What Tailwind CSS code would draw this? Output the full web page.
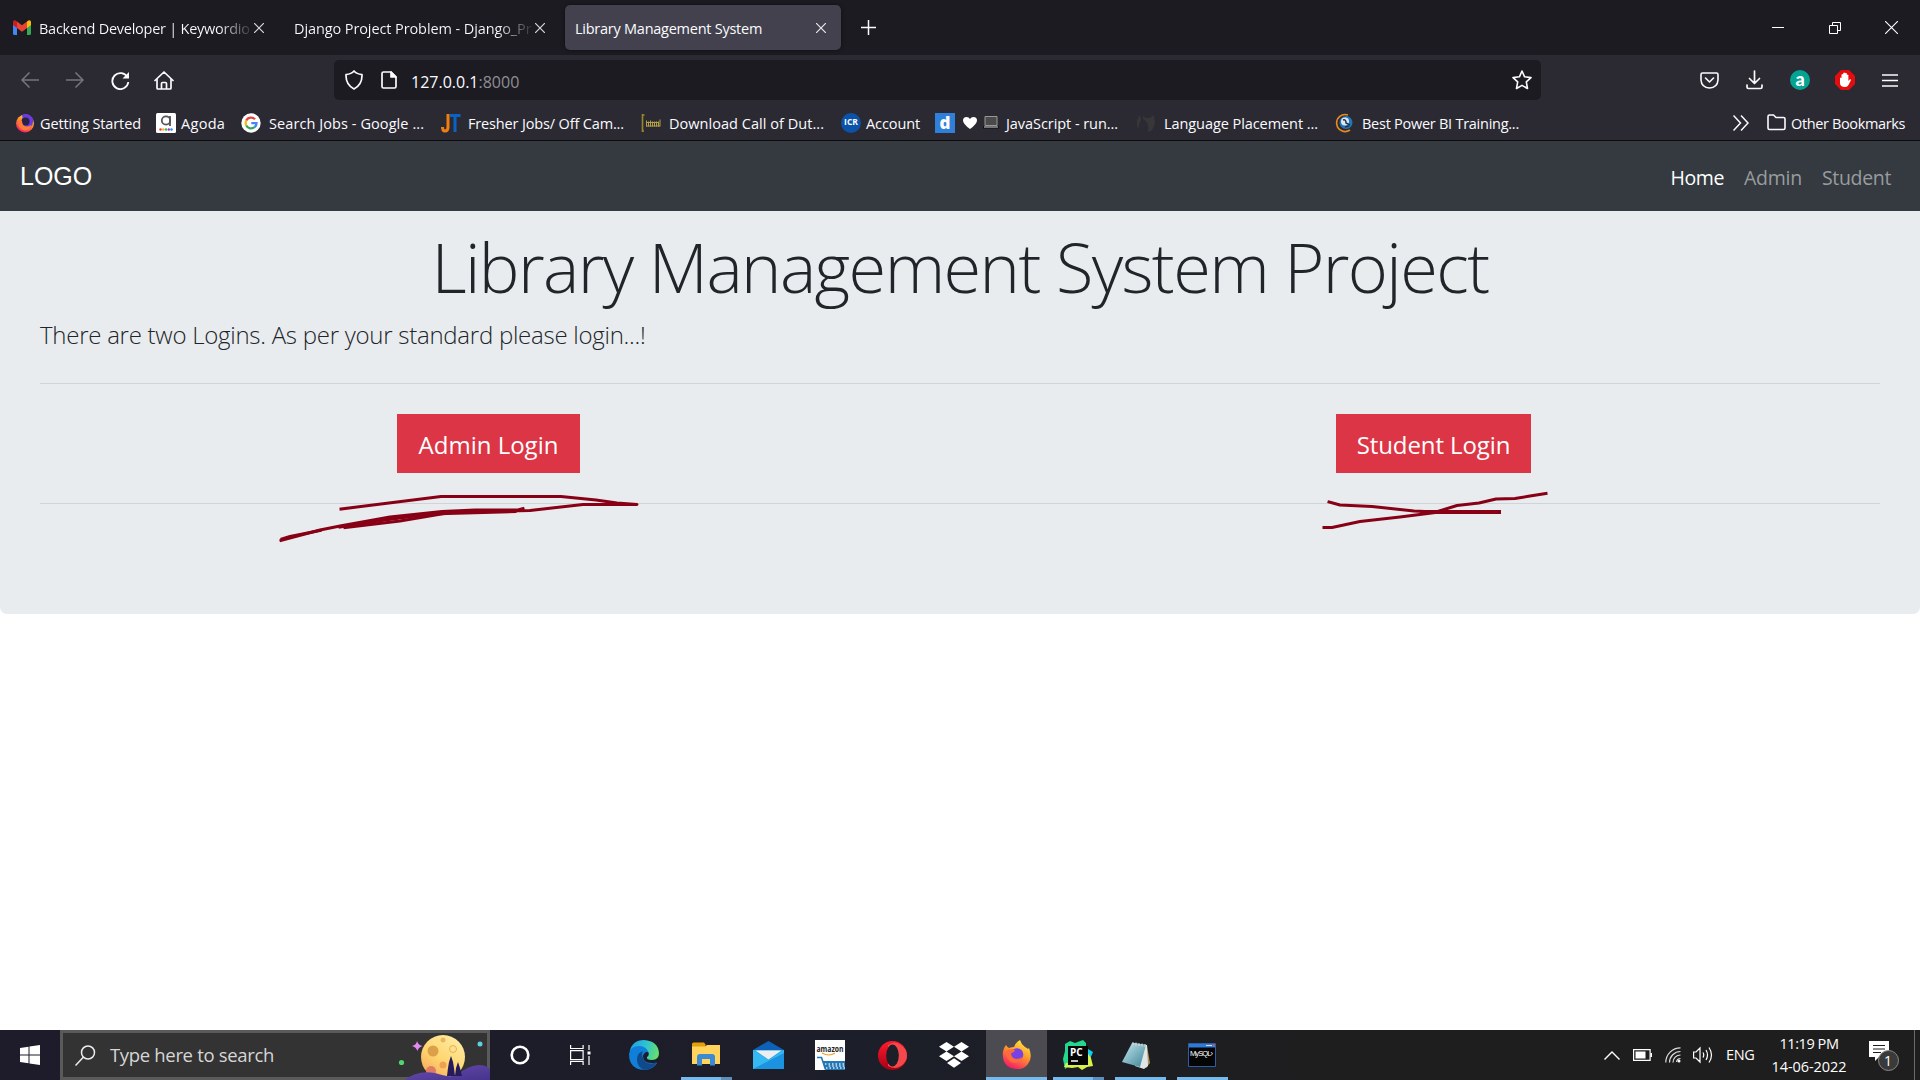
<!DOCTYPE html>
<html lang="en">
<head>
<meta charset="utf-8">
<title>Library Management System</title>
<script src="https://cdn.jsdelivr.net/npm/@tailwindcss/browser@4"></script>
</head>
<body class="h-[1080px] w-[1920px] overflow-hidden bg-white font-['Open_Sans','Noto_Sans',sans-serif] antialiased">
<div class="flex h-full flex-col">

<!-- Tab strip -->
<header class="flex h-[55px] shrink-0 items-center bg-[#1c1b22] text-[14.5px] text-[#fbfbfe]">
  <div class="flex w-[281px] items-center pl-[13px]">
    <svg class="mr-[8px] h-[15px] w-[18px]" viewBox="0 0 18 15"><path d="M0 2v11.500Q0 15 1.500 15H4V5z" fill="#4285f4"/><path d="M14 5v10h2.500Q18 15 18 13.500V2z" fill="#34a853"/><path d="M14 1.500V8l4-3V2q-.5-3-4-.5" fill="#fbbc04"/><path d="M0 2v3l4 3V1.500Q.5-1 0 2" fill="#c5221f"/><path d="M4 1.500V8l5 3.800L14 8V1.500L9 5.300z" fill="#ea4335"/></svg>
    <span class="w-[212px] bg-linear-to-r from-[#fbfbfe] from-85% to-[#33323a] bg-clip-text pt-[2px] tracking-[-0.25px] whitespace-nowrap text-transparent">Backend Developer | Keywordio</span>
    <svg class="ml-[3px] h-[10px] w-[10px]" viewBox="0 0 10 10" stroke="#d8d8dc" stroke-width="1.200"><path d="M0 0l10 10M10 0L0 10"/></svg>
  </div>
  <div class="flex w-[284px] items-center pl-[13px]">
    <span class="w-[239px] bg-linear-to-r from-[#fbfbfe] from-85% to-[#29282f] bg-clip-text pt-[2px] tracking-[-0.1px] whitespace-nowrap text-transparent">Django Project Problem - Django_Pr</span>
    <svg class="ml-[2px] h-[10px] w-[10px]" viewBox="0 0 10 10" stroke="#d8d8dc" stroke-width="1.200"><path d="M0 0l10 10M10 0L0 10"/></svg>
  </div>
  <div class="flex h-[45px] w-[276px] items-center justify-between rounded-[5px] bg-[#42414d] pr-[15px] pl-[10px] shadow-[0_0_4px_rgba(0,0,0,.5)]">
    <span class="pt-[2px] tracking-[-0.25px] whitespace-nowrap">Library Management System</span>
    <svg class="h-[10px] w-[10px]" viewBox="0 0 10 10" stroke="#e8e8ec" stroke-width="1.200"><path d="M0 0l10 10M10 0L0 10"/></svg>
  </div>
  <svg class="ml-[20px] h-[15px] w-[15px]" viewBox="0 0 15 15" stroke="#fbfbfe" stroke-width="1.500"><path d="M7.500 0v15M0 7.500h15"/></svg>
  <div class="ml-auto flex items-center pr-[22px]">
    <svg class="h-[12px] w-[12px]" viewBox="0 0 12 12" stroke="#fff"><path d="M0 5.500h12"/></svg>
    <svg class="ml-[45px] h-[12px] w-[12px]" viewBox="0 0 12 12" fill="none" stroke="#fff"><path d="M.5 3.500h8v8h-8zM3.500 3V.5h8v8H9"/></svg>
    <svg class="ml-[44px] h-[13px] w-[13px]" viewBox="0 0 13 13" stroke="#fff" stroke-width="1.100"><path d="M0 0l13 13M13 0L0 13"/></svg>
  </div>
</header>

<!-- Navigation toolbar -->
<div class="flex h-[50px] shrink-0 items-center bg-[#2b2a33] text-[#fbfbfe]">
  <svg class="ml-[21px] h-[18px] w-[18px]" viewBox="0 0 18 18" fill="none" stroke="#77767e" stroke-width="1.500"><path d="M18 9H1M8.500 1.500L1 9l7.500 7.500"/></svg>
  <svg class="ml-[27px] h-[18px] w-[18px]" viewBox="0 0 18 18" fill="none" stroke="#77767e" stroke-width="1.500"><path d="M0 9h17M9.500 1.500L17 9l-7.500 7.500"/></svg>
  <svg class="ml-[27px] h-[19px] w-[19px]" viewBox="0 0 19 19" fill="none" stroke="#fbfbfe" stroke-width="1.800"><path d="M16.500 6.500a8 8 0 1 0 .8 4.500"/><path d="M18 1v6.500h-6.500z" fill="#fbfbfe" stroke="none"/></svg>
  <svg class="ml-[24px] h-[19px] w-[20px]" viewBox="0 0 20 19" fill="none" stroke="#fbfbfe" stroke-width="1.700" stroke-linejoin="round" stroke-linecap="round"><path d="M1 9.500L10 1l9 8.500M3 8v9q0 1 1 1h12q1 0 1-1V8M7.500 18v-5.500q0-1 1-1h3q1 0 1 1V18"/></svg>
  <div class="ml-[160px] flex h-[40px] w-[1207px] items-center rounded-[5px] bg-[#1c1b22] pr-[9px] pl-[11px] text-[16px]">
    <svg class="h-[20px] w-[18px]" viewBox="0 0 18 20" fill="none" stroke="#fbfbfe" stroke-width="1.700" stroke-linejoin="round"><path d="M9 1q2.500 2.800 8 3.700.4 10-8 14.300Q.6 14.700 1 4.700 6.500 3.800 9 1z"/></svg>
    <svg class="ml-[18px] h-[18px] w-[16px]" viewBox="0 0 16 18" fill="none" stroke="#fbfbfe" stroke-width="1.700" stroke-linejoin="round"><path d="M2.500 1H10l5 5v9.500q0 1.500-1.500 1.500h-11Q1 17 1 15.500v-13Q1 1 2.500 1z"/><path d="M10 1v5h5z" fill="#fbfbfe"/></svg>
    <span class="ml-[14px] pt-[3px] whitespace-nowrap">127.0.0.1<span class="text-[#8f8f95]">:8000</span></span>
    <svg class="ml-auto h-[20px] w-[20px]" viewBox="0 0 20 20" fill="none" stroke="#fbfbfe" stroke-width="1.600" stroke-linejoin="round"><path d="M10 1l2.600 5.800 6.400.8-4.700 4.300 1.200 6.600L10 15.400l-5.500 3.100 1.200-6.600L1 7.600l6.400-.8z"/></svg>
  </div>
  <svg class="ml-[159px] h-[17px] w-[19px]" viewBox="0 0 19 17" fill="none" stroke="#fbfbfe" stroke-width="1.600" stroke-linejoin="round" stroke-linecap="round"><path d="M2.500 1h14Q18 1 18 2.500V8q-.5 7.500-8.500 8Q1.500 15.500 1 8V2.500Q1 1 2.500 1zM5.500 6l4 4 4-4"/></svg>
  <svg class="ml-[27px] h-[20px] w-[17px]" viewBox="0 0 17 19" fill="none" stroke="#fbfbfe" stroke-width="1.700" stroke-linecap="round" stroke-linejoin="round"><path d="M8.500 .5v12M3.500 8l5 5 5-5M1 14.500v2Q1 18 2.500 18h12q1.500 0 1.500-1.500v-2"/></svg>
  <span class="ml-[27px] flex h-[20px] w-[20px] items-center justify-center rounded-full bg-[#05a392] pb-[3px] font-[Lato] text-[18px] leading-none font-black text-white">a</span>
  <svg class="ml-[25px] h-[20px] w-[20px]" viewBox="0 0 20 20"><path d="M6 0h8l6 6v8l-6 6H6l-6-6V6z" fill="#e40d0d"/><path d="M5 8q.8-1 1.500 0V4.500q.9-1 1.700 0V3q.9-1 1.800 0v.3q.9-.9 1.800 0V5q.9-.8 1.600 0v6l1.200-1.500q1.300-.6 1.400.5L13.500 15q-1 2-3.500 2-5 0-5-4z" fill="#fff"/></svg>
  <svg class="ml-[27px] h-[13px] w-[16px]" viewBox="0 0 16 13" stroke="#fbfbfe" stroke-width="1.500"><path d="M0 1h16M0 6.500h16M0 12h16"/></svg>
</div>

<!-- Bookmarks toolbar -->
<div class="flex h-[36px] shrink-0 items-center border-b border-[#0c0c0d] bg-[#2b2a33] pl-[15px] text-[14.5px] whitespace-nowrap text-[#fbfbfe]">
  <div class="flex w-[141px] items-center"><svg class="mr-[5px] h-[20px] w-[20px]" viewBox="0 0 20 20"><defs><linearGradient id="fx" x1=".8" y1="0" x2=".3" y2="1"><stop offset="0" stop-color="#ffe14a"/><stop offset=".5" stop-color="#ff8a2a"/><stop offset="1" stop-color="#f5156c"/></linearGradient></defs><circle cx="10" cy="10.500" r="9" fill="url(#fx)"/><path d="M7 2q7-3 11 4 1 5-3 9-6 2-9-3 0-3 1-5 1-2 0-5" fill="#6a3be0"/><circle cx="10.500" cy="8.500" r="4" fill="#2b2140"/><path d="M3 8q2-2 4 0 0 5 5 5.500 3 0 4.500-2Q16 17 10 17.500 3 17 3 8" fill="#ff7a3a"/></svg><span class="pt-[2px] tracking-[-0.1px]">Getting Started</span></div>
  <div class="flex w-[85px] items-center"><svg class="mr-[5px] h-[20px] w-[20px]" viewBox="0 0 20 20"><rect width="20" height="20" rx="1.500" fill="#fff"/><circle cx="10" cy="7.500" r="4.200" fill="none" stroke="#555" stroke-width="1.800"/><path d="M14 3v10" stroke="#555" stroke-width="1.800"/><g><circle cx="4.500" cy="16.500" r="1.200" fill="#e33"/><circle cx="7.300" cy="16.500" r="1.200" fill="#fa2"/><circle cx="10" cy="16.500" r="1.200" fill="#3b4"/><circle cx="12.800" cy="16.500" r="1.200" fill="#93c"/><circle cx="15.500" cy="16.500" r="1.200" fill="#28e"/></g></svg><span class="pt-[2px] tracking-[0.3px]">Agoda</span></div>
  <div class="flex w-[200px] items-center"><svg class="mr-[8px] h-[20px] w-[20px]" viewBox="0 0 20 20" fill="none" stroke-width="2.300"><circle cx="10" cy="10" r="9.700" fill="#fff"/><path d="M14 6.200A5.500 5.500 0 0 0 5.200 7.500" stroke="#ea4335"/><path d="M5.200 7.500a5.500 5.500 0 0 0 0 5" stroke="#fbbc04"/><path d="M5.200 12.500a5.500 5.500 0 0 0 8.500 1.500" stroke="#34a853"/><path d="M13.700 14q1.800-1.500 1.800-3.800H10.300" stroke="#4285f4"/></svg><span class="pt-[2px] tracking-[0.08px]">Search Jobs - Google ...</span></div>
  <div class="flex w-[200px] items-center"><svg class="mr-[7px] h-[20px] w-[20px]" viewBox="0 0 20 20" fill="none" stroke-width="3"><path d="M7 1v13q0 4-3 4-2.500 0-2.500-4" stroke="#f07f13"/><path d="M9 2.500h10.500M14 2v17" stroke="#0a62c4"/></svg><span class="pt-[2px] tracking-[-0.15px]">Fresher Jobs/ Off Cam...</span></div>
  <div class="flex w-[200px] items-center"><svg class="mr-[8px] h-[20px] w-[20px]" viewBox="0 0 20 20" fill="none"><path d="M1.500 1v18M1 2h2.500M1 18h2" stroke="#9a872c" stroke-width="1.600"/><path d="M5.500 7.500v6M7.500 8.500v5M9.500 7.500v6M11.500 8.500v5M13.500 8.500v5M15.500 8.500v5M17.500 8.500v5M19 6.500v7M5 13h14M6 9.500h12" stroke="#b3a045" stroke-width="1"/></svg><span class="pt-[2px] tracking-[0.04px]">Download Call of Dut...</span></div>
  <div class="flex w-[94px] items-center"><span class="mr-[5px] flex h-[20px] w-[20px] items-center justify-center rounded-full bg-[#0a53a8] text-[8.500px] font-bold">ICR</span><span class="pt-[2px] tracking-[-0.1px]">Account</span></div>
  <div class="flex w-[200px] items-center"><span class="flex h-[20px] w-[20px] items-center justify-center bg-[#2f80d8] pb-[1px] text-[17px] leading-none font-extrabold">d</span>
    <svg class="ml-[8px] h-[12px] w-[14px]" viewBox="0 0 14 12"><path d="M7 12Q0 7 0 3.500 0 0 3.500 0 6 0 7 2 8 0 10.500 0 14 0 14 3.500 14 7 7 12z" fill="#fff"/></svg>
    <svg class="ml-[6px] h-[13px] w-[16px]" viewBox="0 0 16 13"><path d="M2 .5h12v9H2z" fill="#4a4a4a" stroke="#999"/><path d="M0 10h16v2.500H0z" fill="#111"/><path d="M1 11h14" stroke="#d8d8d8"/></svg>
    <span class="ml-[7px] pt-[2px] tracking-[-0.06px]">JavaScript - run...</span></div>
  <div class="flex w-[200px] items-center"><svg class="mr-[9px] h-[20px] w-[20px]" viewBox="0 0 20 20"><path d="M5 2Q-1 9 4 17q-1-6 2-10zM8 3l3 2h4l3-3q3 5 1 11-1 5-6 6 2-9-5-13z" fill="#37373a"/></svg><span class="pt-[2px] tracking-[-0.07px]">Language Placement ...</span></div>
  <div class="flex w-[200px] items-center"><svg class="mr-[7px] h-[20px] w-[20px]" viewBox="0 0 20 20" fill="none"><path d="M13 2A8.500 8.500 0 1 0 15 17" stroke="#e88b1c" stroke-width="1.600"/><circle cx="11" cy="9.500" r="6.500" fill="#2277b8"/><circle cx="10" cy="8.500" r="4" fill="#dfe8ee"/><path d="M8 7q3-1 3 3l4 2M10 14l4-1" stroke="#235" stroke-width="1.500"/></svg><span class="pt-[2px] tracking-[-0.26px]">Best Power BI Training...</span></div>
  <svg class="ml-auto h-[16px] w-[16px]" viewBox="0 0 16 16" fill="none" stroke="#fbfbfe" stroke-width="1.500"><path d="M.5.500L7.500 8l-7 7.500M8 .5L15 8l-7 7.500"/></svg>
  <svg class="mr-[5px] ml-[18px] h-[17px] w-[19px]" viewBox="0 0 19 17" fill="none" stroke="#fbfbfe" stroke-width="1.600" stroke-linejoin="round"><path d="M1 14V2.500Q1 1 2.500 1h4L9 3.500h7.500Q18 3.500 18 5v9q0 1.500-1.500 1.500h-14Q1 15.500 1 14z"/></svg>
  <span class="mr-[15px] pt-[2px] tracking-[-0.37px]">Other Bookmarks</span>
</div>

<!-- Site navbar -->
<nav class="flex h-[70px] shrink-0 items-center justify-between bg-[#343a40] pr-[29px] pl-[20px] text-[19.5px]">
  <span class="pt-[2px] font-['Liberation_Sans',Arial,sans-serif] text-[25px] text-white">LOGO</span>
  <div class="flex items-center pt-[4px]">
    <span class="mr-[20px] tracking-[-0.4px] text-white">Home</span>
    <span class="mr-[20px] tracking-[-0.24px] text-[#999c9f]">Admin</span>
    <span class="tracking-[-0.34px] text-[#999c9f]">Student</span>
  </div>
</nav>

<!-- Login chooser -->
<main class="relative h-[403px] shrink-0 rounded-b-[7px] bg-[#e9ecef] px-[40px] text-[#212529]">
  <h1 class="flex h-[104px] items-center justify-center pt-[8px] text-[68.5px] font-light tracking-[-1.6px] whitespace-nowrap">Library Management System Project</h1>
  <p class="flex h-[68px] items-start pt-[2px] text-[24px] font-light tracking-[-0.26px] whitespace-nowrap">There are two Logins. As per your standard please login...!</p>
  <hr class="border-[#d1d4d7]">
  <div class="flex h-[119px] items-start pt-[30px] text-[24px] text-white">
    <div class="ml-[357px] flex h-[59px] w-[183px] items-center justify-center bg-[#dc3545] pt-[3px]">Admin Login</div>
    <div class="ml-[756px] flex h-[59px] w-[195px] items-center justify-center bg-[#dc3545] pt-[3px] tracking-[-0.1px]">Student Login</div>
  </div>
  <hr class="border-[#d1d4d7]">
  <!-- Hand-drawn underlines beneath the two buttons -->
  <svg class="absolute top-[269px] left-[260px] h-[80px] w-[400px]" viewBox="260 480 400 80" fill="none" stroke="#880015" stroke-width="3" stroke-linecap="square" stroke-linejoin="round"><path d="M341 509L405 501 441 496.500H561L596 500 617 503 637 504.500H583L552 508 530 510.500 450 512.500 400 521 345 527.500"/><path d="M281 540.500L320 530 340 526 390 517 442 511.500 475 510H518L523 508.500"/><path d="M282 539L290 536.500 320 530.500M340 527L385 520 430 514 515 511.500"/></svg>
  <svg class="absolute top-[269px] left-[1300px] h-[60px] w-[280px]" viewBox="1300 480 280 60" fill="none" stroke="#880015" stroke-width="3" stroke-linecap="square" stroke-linejoin="round"><path d="M1329 502L1340 505 1372 506.500 1414 511 1436 512 1457 505.500 1479 503 1496 499 1515 498.500 1530 496 1546 493.500"/><path d="M1324 527.500H1332L1360 521.500 1400 517 1436 512.500"/><path stroke-width="4" d="M1422 512h77"/></svg>
</main>

<!-- Taskbar -->
<footer class="mt-auto flex h-[50px] shrink-0 items-stretch bg-linear-to-r from-[#1e1b2b] via-[#1c1e29] via-45% to-[#1e1e1e] to-70% text-white">
  <div class="flex w-[60px] items-center justify-center"><svg class="h-[20px] w-[20px]" viewBox="0 0 20 20" fill="#fff"><path d="M0 3l8.500-1.200v7.700H0zM9.500 1.600L20 0v9.500H9.500zM0 10.500h8.500v7.800L0 17.100zM9.500 10.500H20V20L9.500 18.500z"/></svg></div>
  <div class="relative flex w-[430px] items-center border-[3px] border-[#5a5a5a] bg-[#333] pl-[12px]">
    <svg class="h-[21px] w-[21px]" viewBox="0 0 21 21" fill="none" stroke="#eee" stroke-width="1.500"><circle cx="13" cy="7.500" r="6.500"/><path d="M8.500 12L.5 20.500"/></svg>
    <span class="ml-[14px] text-[18.5px] tracking-[-0.33px] whitespace-nowrap text-[#d6d6d6]">Type here to search</span>
    <svg class="absolute -right-[3px] -bottom-[3px] h-[47px] w-[92px]" viewBox="398 1033 92 47"><defs><linearGradient id="mn" x1="0" y1="1" x2=".7" y2="0"><stop offset="0" stop-color="#f59a54"/><stop offset=".5" stop-color="#ffd56e"/><stop offset="1" stop-color="#ffeaa0"/></linearGradient><linearGradient id="hl" x1="0" y1="0" x2="1" y2="1"><stop offset="0" stop-color="#6b4bb0"/><stop offset="1" stop-color="#45348c"/></linearGradient></defs>
      <circle cx="443" cy="1057" r="22" fill="url(#mn)"/><circle cx="433" cy="1051" r="5.500" fill="#dba04a"/><circle cx="453" cy="1049" r="3.500" fill="#ffe08a" stroke="#e2b355"/><circle cx="443" cy="1040" r="2.500" fill="#e9b65c"/><circle cx="443" cy="1065" r="3.500" fill="#efa055"/><circle cx="431" cy="1071" r="5" fill="#df7a64"/>
      <path d="M417 1041q1.500 4.500 5.500 5-4.500 1.500-5 5-1.500-4-5.500-5 4.500-1 5-5" fill="#e58af5"/><circle cx="401.500" cy="1062.500" r="2.600" fill="#4fd66c"/><circle cx="480" cy="1044" r="2.500" fill="#5fd0e0"/>
      <path d="M405 1080q12-10 30-7 14 5 22 2 12-10 22-10 7 0 11 4v11z" fill="url(#hl)"/><path d="M451 1056l2 6 1 6 1 8h-8l1-8 1-6zM458 1062l2 6 2 8h-7l1-8z" fill="#241a5c"/></svg>
  </div>
  <div class="flex w-[60px] items-center justify-center"><svg class="h-[20px] w-[20px]" viewBox="0 0 20 20"><circle cx="10" cy="10" r="8.300" fill="none" stroke="#fff" stroke-width="2.600"/></svg></div>
  <div class="flex w-[63px] items-center pl-[20px]"><svg class="h-[20px] w-[21px]" viewBox="0 0 21 20" fill="none" stroke="#fff" stroke-width="1.200"><path d="M.6 0v3.500h12.500V0M.6 5.600h12.500v9H.6zM.6 20v-3.500h12.500V20M19 0v5M19 11v9"/><path d="M17.500 6.500h3v3h-3z" fill="#fff" stroke="none"/></svg></div>

  <div class="flex w-[62px] items-center justify-center"><svg class="h-[30px] w-[30px]" viewBox="0 0 30 30"><defs><linearGradient id="eg" x1="0" y1=".3" x2="1" y2=".5"><stop offset="0" stop-color="#1f9fe0"/><stop offset=".5" stop-color="#2cc0d8"/><stop offset="1" stop-color="#66e06a"/></linearGradient></defs><path d="M0 14Q2 5 10 5q9 0 11 8-5-3-7 3 0 7 8 7h6q-4 7-13 7Q0 29 0 14" fill="#0f7fda"/><path d="M8 19q0-6 6-8-2 3 0 7 2 6 9 5.500l5-1.500q-4 8-13 8-7-3-7-11" fill="#114a8b"/><path d="M.5 12Q3 0 15 0q14 1 15 13 0 7-7 7-6 0-5-3 3-2 1-6-3-5-9-5Q3 6 .5 12" fill="url(#eg)"/></svg></div>
  <div class="relative flex w-[62px] items-center justify-center pb-[2px]"><svg class="h-[24px] w-[28px]" viewBox="0 0 28 24"><path d="M0 2Q0 .5 1.500.5H12l1.500 2v3H0z" fill="#e3a008"/><path d="M0 4.500h13l2-1.500h13v19H0z" fill="#ffd35c"/><path d="M5 23.500V15q0-3 3-3h12q3 0 3 3v8.500h-5V17h-8v6.500z" fill="#3a8ad6"/></svg><span class="absolute bottom-0 left-[6px] h-[3px] w-[51px] bg-linear-to-r from-[#76b9ed] from-79% to-[#5d8fb8] to-79%"></span></div>
  <div class="flex w-[62px] items-center justify-center"><svg class="h-[28px] w-[31px]" viewBox="0 0 31 28"><path d="M0 9L15.500 0 31 9v4H0z" fill="#0c62b8"/><path d="M0 9h31v19H0z" fill="#2aa8ea"/><path d="M0 28L31 9v19z" fill="#1c93e0"/><path d="M0 9l15.500 10L31 9v3L0 28z" fill="#36b9f3"/><path d="M2.500 9.500h26L15.500 18.500z" fill="#eee"/></svg></div>
  <div class="flex w-[62px] items-center justify-center"><svg class="h-[30px] w-[30px]" viewBox="0 0 30 30"><path d="M0 0h30v30H0z" fill="#fff"/><text x="1.500" y="12" textLength="27" lengthAdjust="spacingAndGlyphs" font-family="Open Sans" font-weight="700" font-size="8.500" fill="#222">amazon</text><path d="M7 13q7 4 13 0" stroke="#f79a1c" fill="none" stroke-width="1.200"/><path d="M2 17.500h4.500l4 12" stroke="#2479b5" stroke-width="1.600" fill="none"/><path d="M7.500 21H30v9H10.500z" fill="#2479b5"/><path d="M10 24h20M11 28h19" stroke="#d5e8f5" stroke-width="1.500" stroke-dasharray="1.500 2"/><path d="M12 26h18" stroke="#d5e8f5" stroke-width="1.500" stroke-dasharray="1.500 2" stroke-dashoffset="1.800"/></svg></div>
  <div class="flex w-[62px] items-center justify-center"><svg class="h-[29px] w-[29px]" viewBox="0 0 29 29"><defs><linearGradient id="op" x1="0" y1="0" x2="0" y2="1"><stop offset="0" stop-color="#ff1b2d"/><stop offset="1" stop-color="#a70014"/></linearGradient></defs><circle cx="14.500" cy="14.500" r="14.500" fill="url(#op)"/><path d="M10 4q7-5 13 0 6 4 6 10.500T23 25q-6 4-13 0z" fill="#f5484c"/><ellipse cx="14.500" cy="14.500" rx="6.300" ry="11" fill="#1c1e28"/></svg></div>
  <div class="flex w-[62px] items-center justify-center"><svg class="h-[26px] w-[30px]" viewBox="0 0 30 26" fill="#fff"><path d="M7.500 0L15 4.700 7.500 9.400 0 4.700zM22.500 0L30 4.700l-7.500 4.700L15 4.700zM7.500 9.600L15 14.300 7.500 19 0 14.300zM22.500 9.600l7.500 4.700-7.500 4.700-7.500-4.700zM15 16.300l7 4.700-7 4.700L8 21z"/></svg></div>
  <div class="ml-[1px] flex w-[61px] items-center justify-center border-b-[3px] border-[#76b9ed] bg-[#4b4b51] pt-[2px]"><svg class="h-[29px] w-[29px]" viewBox="0 0 29 29"><defs><linearGradient id="ff" x1=".8" y1="0" x2=".3" y2="1"><stop offset="0" stop-color="#fff04a"/><stop offset=".45" stop-color="#ff9a2a"/><stop offset="1" stop-color="#f5156c"/></linearGradient></defs><path d="M4 5q1 2 3 3 3-1 5-1 2-5 6-7 1 4 5 7 2 1 3 2l1-1q4 10-1 16-5 6-12 5Q2 28 1 17q-1-7 3-12" fill="url(#ff)"/><circle cx="15" cy="14.500" r="6.300" fill="#7542e5"/><path d="M4 11q4-3 9-1-1 3-4 3 0 5 5 6 4 0 6-2-1 6-8 6-8-2-8-12" fill="#ff6a3a"/></svg></div>
  <div class="relative flex w-[62px] items-center justify-center"><svg class="h-[30px] w-[30px]" viewBox="0 0 30 30"><path d="M2 4l5-3 5 2 8-3 3 3v6H5v18l-3 2-2-10 2-8z" fill="#22d88f"/><path d="M25 9l5 3-3 7h-2z" fill="#10cff0"/><path d="M24 12l4 6 2 8-6 1-5 3-4-3-6 1-8-1 2-4h21z" fill="#d9f04b"/><path d="M5 6h20v19H5z" fill="#050505"/><text x="7" y="16" font-family="Open Sans" font-weight="700" font-size="10" fill="#fff">PC</text><path d="M8 21h7" stroke="#fff" stroke-width="1.500"/></svg><span class="absolute bottom-0 left-[6px] h-[3px] w-[51px] bg-linear-to-r from-[#76b9ed] from-79% to-[#5d8fb8] to-79%"></span></div>
  <div class="relative flex w-[62px] items-center justify-center pr-[8px]"><svg class="h-[27px] w-[28px]" viewBox="0 0 28 27"><defs><linearGradient id="np" x1="0" y1="0" x2="1" y2="1"><stop offset="0" stop-color="#c5e8ee"/><stop offset="1" stop-color="#3c8296"/></linearGradient></defs><path d="M25 4l3 17-4 5z" fill="#b0905a"/><path d="M11 1l14 2 1 21-4 3-9-3z" fill="#dfe4e6"/><path d="M10 1l14 2-6 22-18-5z" fill="url(#np)"/><path d="M11 0v3M14 .5v3M17 1v3M20 1.500v3M23 2v3" stroke="#ddd"/></svg><span class="absolute bottom-0 left-[6px] h-[3px] w-[51px] bg-[#76b9ed]"></span></div>
  <div class="relative flex w-[62px] items-center justify-center pb-[1px]"><svg class="h-[24px] w-[28px]" viewBox="0 0 28 24"><path d="M.5.500h27v23H.5z" fill="#050505" stroke="#2c5faa"/><path d="M1 1h26v3.500H1z" fill="#2e7ad6"/><path d="M18 2.500h6" stroke="#cde"/><path d="M25 1.500h2v2h-2z" fill="#d54"/><text x="2" y="13" textLength="23" font-family="Liberation Sans" font-size="7.500" fill="#fff">MySQL›</text></svg><span class="absolute bottom-0 left-[6px] h-[3px] w-[51px] bg-[#76b9ed]"></span></div>

  <!-- System tray -->
  <div class="ml-auto flex items-center text-[14.5px]">
    <svg class="h-[9px] w-[16px]" viewBox="0 0 16 9" fill="none" stroke="#fff" stroke-width="1.400"><path d="M.5 8.500L8 1l7.500 7.500"/></svg>
    <svg class="ml-[13px] h-[12px] w-[19px]" viewBox="0 0 19 12"><path d="M.6.600h16.500v10.800H.6z" fill="none" stroke="#fff" stroke-width="1.200"/><path d="M2.500 2.500h10v7h-10zM17.500 4H19v4h-1.500z" fill="#fff"/></svg>
    <svg class="ml-[13px] h-[16px] w-[16px]" viewBox="0 0 16 16" fill="none" stroke="#ddd" stroke-width="1.200"><path d="M.8 15.500A14.700 14.700 0 0 1 15.500.8M4.500 15.500a11 11 0 0 1 11-11M8 15.500A7.500 7.500 0 0 1 15.500 8"/><path d="M11.500 15a4 4 0 0 1 4-3.500"/><circle cx="14" cy="14" r="1.500" fill="#fff" stroke="none"/></svg>
    <svg class="ml-[12px] h-[18px] w-[20px]" viewBox="0 0 20 18" fill="none" stroke="#fff" stroke-width="1.200"><path d="M.6 6H3l4-4v14l-4-4H.6zM10 6.500q1.500 2.500 0 5M13 4q3 5 0 10M16 1.500q5 7.500 0 15"/></svg>
    <span class="ml-[13px] w-[28px] tracking-[-0.4px]">ENG</span>
    <div class="ml-[17px] flex w-[76px] flex-col items-center leading-[23px] whitespace-nowrap"><span class="tracking-[-0.44px]">11:19 PM</span><span class="tracking-[-0.07px]">14-06-2022</span></div>
    <div class="relative ml-[22px] h-[32px] w-[30px]"><svg class="h-[32px] w-[30px]" viewBox="0 0 30 32"><path d="M0 2h20v16H10l-4 4v-4H0z" fill="#fff"/><path d="M4 6.500h12M4 10h12M4 13.500h8" stroke="#1e1e1e" stroke-width="1.200"/><circle cx="19.500" cy="21.500" r="10" fill="#3a3a3a" stroke="#8a8a8a"/></svg><span class="absolute top-[12px] left-[15px] text-[14px] leading-[19px]">1</span></div>
    <span class="mr-[5px] ml-[15px] h-[50px] w-px bg-[#6a6a6a]"></span>
  </div>
</footer>
</div>
</body>
</html>
